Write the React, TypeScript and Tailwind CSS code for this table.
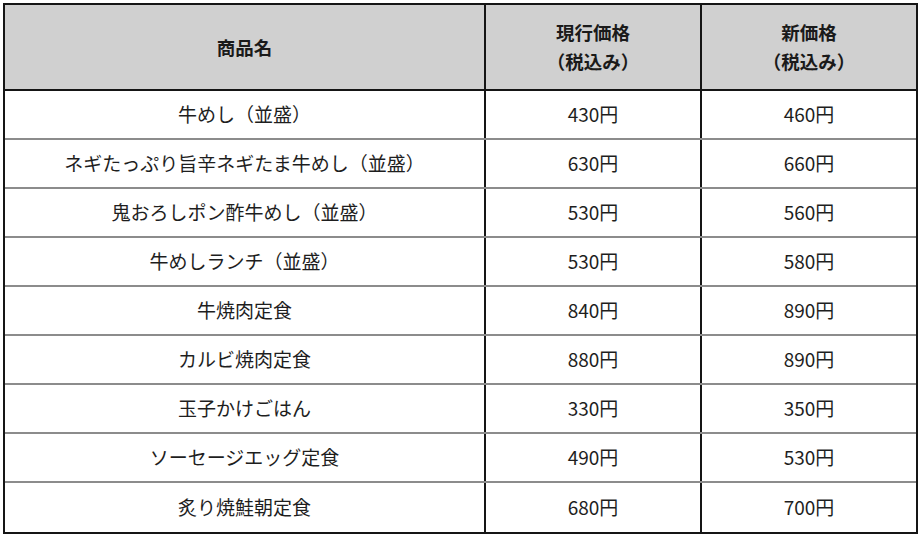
import React from "react";

const rows: [string, string, string][] = [
  ["牛めし（並盛）", "430円", "460円"],
  ["ネギたっぷり旨辛ネギたま牛めし（並盛）", "630円", "660円"],
  ["鬼おろしポン酢牛めし（並盛）", "530円", "560円"],
  ["牛めしランチ（並盛）", "530円", "580円"],
  ["牛焼肉定食", "840円", "890円"],
  ["カルビ焼肉定食", "880円", "890円"],
  ["玉子かけごはん", "330円", "350円"],
  ["ソーセージエッグ定食", "490円", "530円"],
  ["炙り焼鮭朝定食", "680円", "700円"],
];

export default function App() {
  return (
    <div
      className="w-[920px] h-[536px] bg-white pt-[3px] pl-[3px] text-[#1e1e1e]"
      style={{ fontFamily: '"Noto Sans CJK JP", "Noto Sans", sans-serif' }}
    >
      <div className="w-[915px] border-2 border-[#151515]">
        <div className="flex h-[86px] bg-[#d0d0d0] border-b-2 border-[#151515] font-bold text-[18.5px] leading-[29px] text-[#1a1a1a]">
          <div className="w-[481px] border-r-2 border-[#151515] flex items-center justify-center">
            商品名
          </div>
          <div className="w-[216px] border-r-2 border-[#151515] flex flex-col items-center justify-center">
            <span>現行価格</span>
            <span>（税込み）</span>
          </div>
          <div className="flex-1 flex flex-col items-center justify-center">
            <span>新価格</span>
            <span>（税込み）</span>
          </div>
        </div>
        {rows.map((r, i) => (
          <div
            key={i}
            className={
              i < rows.length - 1
                ? "flex h-[49px] border-b-2 border-[#8c8c8c] text-[19px]"
                : "flex h-[49px] text-[19px]"
            }
          >
            <div className="w-[481px] border-r-2 border-[#151515] flex items-center justify-center">
              {r[0]}
            </div>
            <div className="w-[216px] border-r-2 border-[#151515] flex items-center justify-center">
              {r[1]}
            </div>
            <div className="flex-1 flex items-center justify-center">{r[2]}</div>
          </div>
        ))}
      </div>
    </div>
  );
}
